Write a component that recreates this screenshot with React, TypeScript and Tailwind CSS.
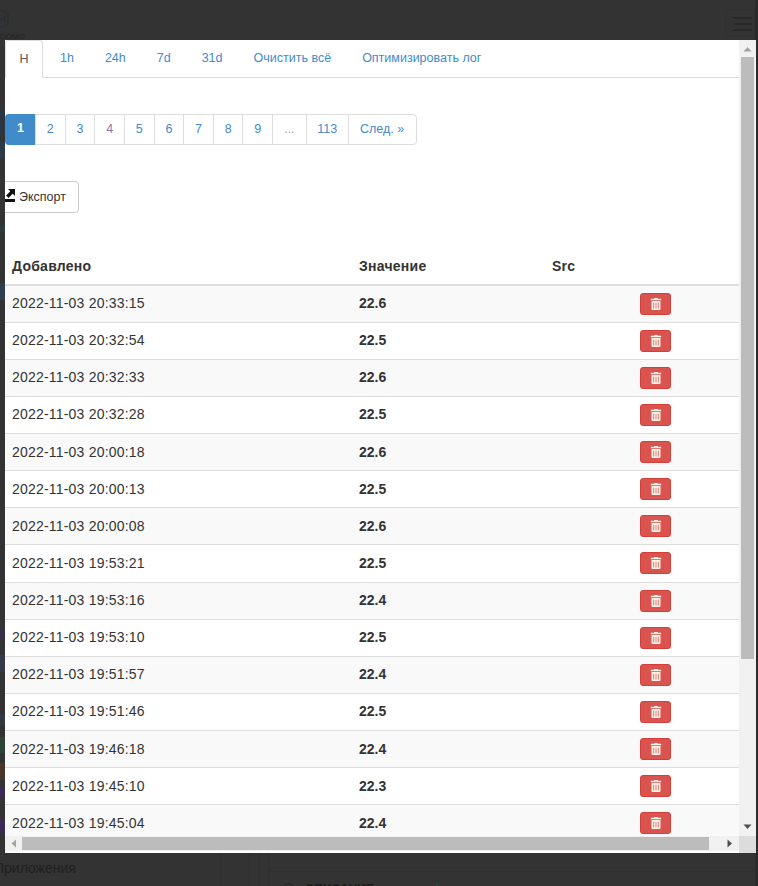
import React from 'react';
import { FaTrashAlt } from 'react-icons/fa';

const rows = [
  ['2022-11-03 20:33:15', '22.6'],
  ['2022-11-03 20:32:54', '22.5'],
  ['2022-11-03 20:32:33', '22.6'],
  ['2022-11-03 20:32:28', '22.5'],
  ['2022-11-03 20:00:18', '22.6'],
  ['2022-11-03 20:00:13', '22.5'],
  ['2022-11-03 20:00:08', '22.6'],
  ['2022-11-03 19:53:21', '22.5'],
  ['2022-11-03 19:53:16', '22.4'],
  ['2022-11-03 19:53:10', '22.5'],
  ['2022-11-03 19:51:57', '22.4'],
  ['2022-11-03 19:51:46', '22.5'],
  ['2022-11-03 19:46:18', '22.4'],
  ['2022-11-03 19:45:10', '22.3'],
  ['2022-11-03 19:45:04', '22.4'],
];

const tabs = ['1h', '24h', '7d', '31d', 'Очистить всё', 'Оптимизировать лог'];
const pages = ['2', '3', '4', '5', '6', '7', '8', '9'];

const Arrow = ({ d, className }: { d: string; className: string }) => (
  <svg width="9" height="9" viewBox="0 0 9 9" className={className}>
    <path d={d} />
  </svg>
);

const App: React.FC = () => {
  return (
    <div className="relative h-[886px] w-[758px] overflow-hidden bg-[#333333] font-['Liberation_Sans',Arial,sans-serif] text-[14px] text-[#333333]">
      {/* dimmed page behind the modal */}
      <div className="flex h-full flex-col border-r-[3px] border-[#2b2b2b]">
        <div className="flex h-[40px] shrink-0 items-start justify-between overflow-hidden pt-[9px]">
          <div className="-ml-[7px] flex flex-col items-start text-[8px] leading-[9px] text-[#222222]">
            <svg width="16" height="20" viewBox="0 0 16 20" fill="none" stroke="#2a2f36" strokeWidth="1.5">
              <path d="M8 1 L15 5 V15 L8 19 L1 15 V5 Z" />
              <path d="M4 13 V7 L8 11 L12 7 V13" />
            </svg>
            <span className="ml-[7px] mt-[3px]">DOMO</span>
          </div>
          <div className="flex h-[28px] w-[30px] flex-col gap-[4px] rounded-[3px] border border-[#303030] pl-[7px] pr-[2px] pt-[7px]">
            <span className="h-[2px] w-full bg-[#292929]" />
            <span className="h-[2px] w-full bg-[#292929]" />
            <span className="h-[2px] w-full bg-[#292929]" />
          </div>
        </div>

        <div className="flex w-[5px] flex-1 flex-col">
          <span className="mt-[70px] h-[25px] bg-[#2a3743]" />
          <span className="mt-[6px] h-[17px] bg-[#2b3a4b]" />
          <span className="mt-[67px] h-[7px] bg-[#2c3a44]" />
          <span className="mt-[51px] h-[17px] bg-[#2d3f4e]" />
          <span className="mt-[327px] h-[13px] bg-[#353048]" />
          <span className="mt-[15px] h-[17px] bg-[#33384a]" />
          <span className="mt-[43px] h-[10px] bg-[#2f3a45]" />
          <span className="mt-[12px] h-[16px] bg-[#2d4537]" />
          <span className="mt-[10px] h-[17px] bg-[#4a3628]" />
          <span className="mt-[8px] h-[9px] bg-[#3a2a55]" />
          <span className="mt-[23px] h-[13px] bg-[#3a2a55]" />
        </div>

        <div className="flex h-[33px] shrink-0 items-start">
          <div className="-ml-[6px] h-full w-[227px] border-r border-[#2f2f2f] pt-[6px] text-[14px] leading-[18px] text-[#1f1f1f]">Приложения</div>
          <div className="ml-[28px] h-full w-[10px] border-l border-[#2f2f2f]" />
          <div className="h-full w-[9px] border-l border-[#2f2f2f]" />
          <div className="h-full flex-1 border-l border-[#2f2f2f]">
            <div className="mt-[18px] flex h-[15px] items-start border-t border-[#2f2f2f] pt-[11px] pl-[14px]">
              <span className="h-[12px] w-[12px] rounded-full border border-[#262626]" />
              <span className="ml-[10px] text-[12px] font-bold leading-[12px] text-[#1d1d1d]">ОПИСАНИЕ</span>
              <span className="ml-[62px] h-[4px] w-[2px] bg-[#2d4537]" />
            </div>
          </div>
        </div>
      </div>

      {/* modal */}
      <div className="absolute left-[5px] top-[40px] flex h-[813px] w-[751px] flex-col bg-white">
        <div className="flex min-h-0 flex-1">
          <div className="min-w-0 flex-1 overflow-hidden">
            <div className="flex h-[38px] border-b border-[#dddddd] text-[12.5px] text-[#428bca]">
              <div className="mr-[1.5px] h-[38px] w-[38px] rounded-t-[3px] border border-b-white border-t-[#dddddd] border-x-[#dddddd] text-center leading-[36px] text-[#555555]">Н</div>
              {tabs.map((tab) => (
                <a key={tab} className="px-[15.5px] leading-[36px]">{tab}</a>
              ))}
            </div>

            <div className="mt-[36px] flex h-[31px] text-[12.5px] leading-[29px] text-[#428bca]">
              <span className="w-[31px] rounded-l-[4px] bg-[#428bca] text-center font-bold text-white">1</span>
              {pages.map((page) => (
                <span
                  key={page}
                  className={`-ml-px w-[30.65px] border border-[#dddddd] text-center ${page === '4' ? 'text-[#8c7aa9]' : ''}`}
                >
                  {page}
                </span>
              ))}
              <span className="-ml-px w-[34.5px] border border-[#dddddd] text-center text-[#999999]">...</span>
              <span className="-ml-px w-[43px] border border-[#dddddd] text-center">113</span>
              <span className="-ml-px w-[69px] rounded-r-[4px] border border-[#dddddd] text-center">След. »</span>
            </div>

            <div className="mt-[36px] -ml-[12px] flex h-[32px] w-[86px] items-center gap-[4px] rounded-[4px] border border-[#cccccc] pl-[7px] text-[12.5px] text-[#333333]">
              <svg width="14" height="13" viewBox="0 0 14 13" className="-mt-[4px] shrink-0" fill="#111111">
                <path d="M0 10h14v3H0z" />
                <path d="M7 0 H14 V7 L11.7 4.7 L7.5 8.9 L5.1 6.5 L9.3 2.3 Z" />
              </svg>
              <span>Экспорт</span>
            </div>

            <table className="mt-[35px] w-[734px] table-fixed border-collapse">
              <colgroup>
                <col className="w-[347px]" />
                <col className="w-[193px]" />
                <col className="w-[88px]" />
                <col />
              </colgroup>
              <thead>
                <tr className="h-[37px] border-b-2 border-[#dddddd] text-left font-bold tracking-[0.25px]">
                  <th className="px-[7px]">Добавлено</th>
                  <th className="px-[7px]">Значение</th>
                  <th className="px-[7px]">Src</th>
                  <th />
                </tr>
              </thead>
              <tbody>
                {rows.map(([added, value], i) => (
                  <tr key={added} className={`h-[37.14px] border-b border-[#dddddd] ${i % 2 === 0 ? 'bg-[#f9f9f9]' : 'bg-white'}`}>
                    <td className="px-[7px] tracking-[0.2px]">{added}</td>
                    <td className="px-[7px] font-bold">{value}</td>
                    <td className="px-[7px]" />
                    <td className="px-[7px]">
                      <span className="flex h-[22px] w-[31px] items-center justify-center rounded-[3px] border border-[#d43f3a] bg-[#d9534f] text-[#fff3e8]">
                        <FaTrashAlt size={12} />
                      </span>
                    </td>
                  </tr>
                ))}
              </tbody>
            </table>
          </div>

          {/* vertical scrollbar */}
          <div className="flex w-[17px] shrink-0 flex-col items-center bg-[#f1f1f1]">
            <Arrow d="M4.5 2 L8.5 6.5 H0.5 Z" className="mt-[5px] h-[9px] fill-[#a3a3a3]" />
            <div className="mt-[3px] h-[602px] w-[13px] bg-[#bcbcbc]" />
            <Arrow d="M0.5 2.5 H8.5 L4.5 7 Z" className="mt-auto mb-[5px] h-[9px] fill-[#505050]" />
          </div>
        </div>

        {/* horizontal scrollbar */}
        <div className="flex h-[17px] shrink-0 bg-white">
          <div className="flex h-[15px] min-w-0 flex-1 items-center bg-[#f1f1f1]">
            <Arrow d="M2.5 4.5 L7 0.5 V8.5 Z" className="ml-[4px] h-[9px] fill-[#a3a3a3]" />
            <div className="ml-[4px] h-[13px] w-[687px] bg-[#bcbcbc]" />
            <Arrow d="M2.5 0.5 L7 4.5 L2.5 8.5 Z" className="ml-[16px] h-[9px] fill-[#505050]" />
          </div>
          <div className="w-[17px] bg-[#dcdcdc]" />
        </div>
      </div>
    </div>
  );
};

export default App;
